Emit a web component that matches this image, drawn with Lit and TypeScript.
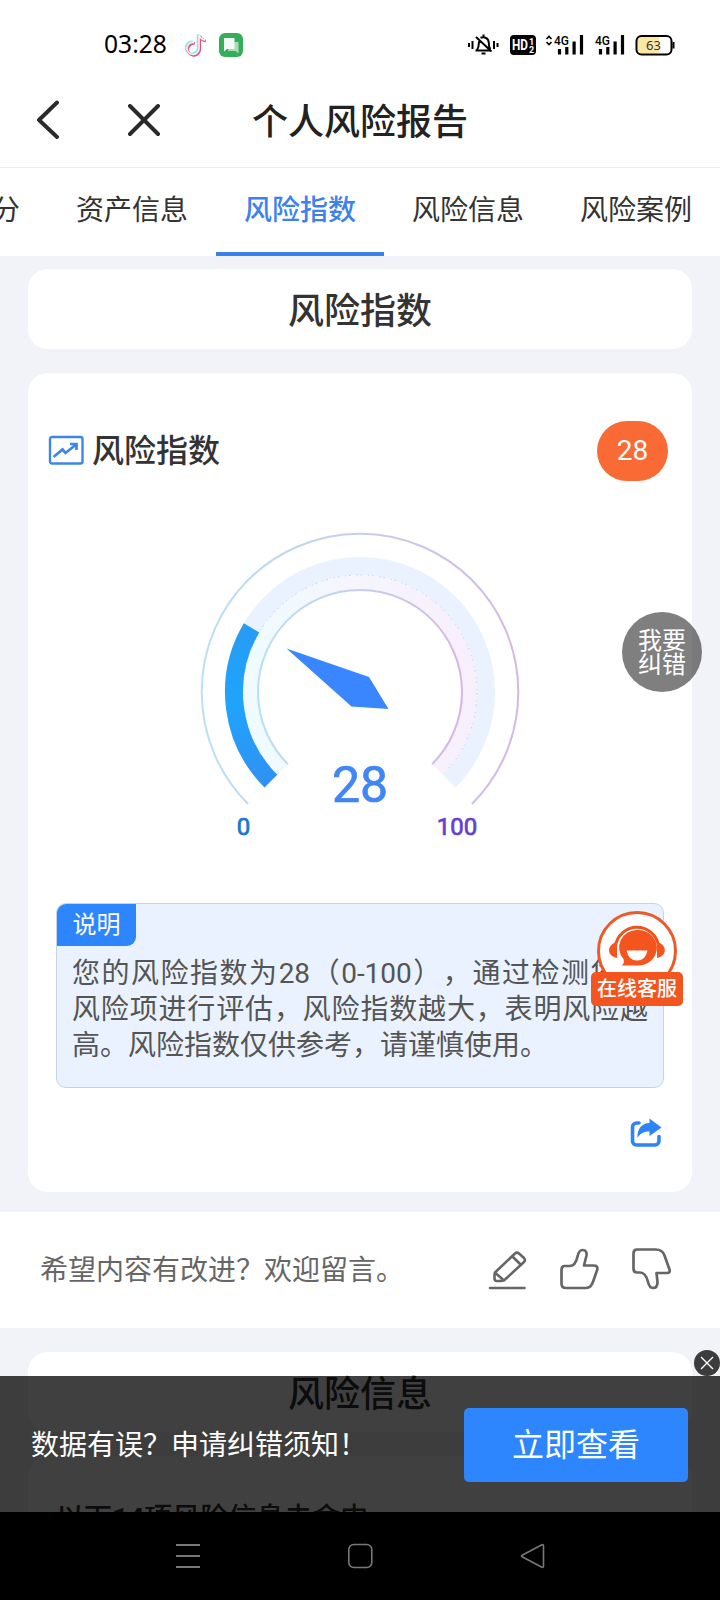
import { LitElement, html, svg, css } from "lit";
import { customElement, property } from "lit/decorators.js";

const point = (r: number, deg: number) => {
  const a = (deg * Math.PI) / 180;
  return `${(170 + r * Math.cos(a)).toFixed(2)} ${(170 + r * Math.sin(a)).toFixed(2)}`;
};

/** Arc of radius r that starts at the lower left and covers a share of the 270° dial. */
const arc = (r: number, share: number) =>
  `M${point(r, 135)}A${r} ${r} 0 ${share * 270 > 180 ? 1 : 0} 1 ${point(r, 135 + share * 270)}`;

@customElement("risk-gauge")
export class RiskGauge extends LitElement {
  @property({ type: Number }) value = 0;

  static styles = css`
    :host { display: block; width: 340px; height: 330px; }
    svg { display: block; }
    text { font-family: Roboto, "Noto Sans CJK SC", sans-serif; font-weight: 400; text-anchor: middle; stroke-width: .7; }
    .value { font-size: 50px; fill: #4186f2; stroke: #4186f2; }
    .min { font-size: 24px; fill: #1577d0; stroke: #1577d0; }
    .max { font-size: 24px; fill: #653fce; stroke: #653fce; }
  `;

  render() {
    return html`<svg width="340" height="330" viewBox="0 0 340 330">
      <defs>
        <linearGradient id="rim" x1="0" x2="1" y1="0" y2="0">
          <stop offset="0" stop-color="#b9e0f4" />
          <stop offset=".5" stop-color="#c8cdec" />
          <stop offset="1" stop-color="#d4b8e4" />
        </linearGradient>
        <linearGradient id="inner" x1="0" x2="1" y1="0" y2="0">
          <stop offset="0" stop-color="#effbff" />
          <stop offset=".5" stop-color="#f5f5fe" />
          <stop offset="1" stop-color="#f8effc" />
        </linearGradient>
        <linearGradient id="fill" x1="0" x2="0" y1="0" y2="1">
          <stop offset="0" stop-color="#269cf6" />
          <stop offset=".5" stop-color="#1fa4fb" />
          <stop offset="1" stop-color="#2f92f3" />
        </linearGradient>
      </defs>
      ${svg`
        <path d=${arc(158.3, 1)} fill="none" stroke="url(#rim)" stroke-width="2" />
        <path d=${arc(109.5, 1)} fill="none" stroke="url(#inner)" stroke-width="15" />
        <path d=${arc(126, 1)} fill="none" stroke="#eaf2ff" stroke-width="18" />
        <path d=${arc(117, 1)} fill="none" stroke="#b9b4d4" stroke-width=".9" stroke-dasharray="1.5 6 1 3" opacity=".75" />
        <path d=${arc(102, 1)} fill="none" stroke="url(#rim)" stroke-width="2" />
        <path d=${arc(126, this.value / 100)} fill="none" stroke="url(#fill)" stroke-width="18" />
      `}
      <path d="M96.500 126.500L179 155L198.500 187L161.500 184.500z" fill="#3a86ff" />
      <text class="value" x="170" y="280.300">${this.value}</text>
      <text class="min" x="53.500" y="313">0</text>
      <text class="max" x="267" y="313">100</text>
    </svg>`;
  }
}

@customElement("app-root")
export class AppRoot extends LitElement {
  static styles = css`
    :host {
      display: block; position: relative; width: 720px; height: 1600px; overflow: hidden;
      background: #f2f3f8; color: #333;
      font-family: Roboto, "Noto Sans CJK SC", sans-serif;
      text-spacing-trim: space-all;
    }
    * { box-sizing: border-box; }
    svg { display: block; flex: none; }
    .status { height: 80px; background: #fff; display: flex; align-items: center; padding: 10px 44px 0 104px; color: #000; }
    .clock { font: 24.6px/30px "Noto Sans", sans-serif; width: 81px; padding-bottom: 2px; white-space: nowrap; }
    .grow { flex: 1; }
    .nav { height: 88px; background: #fff; border-bottom: 1px solid #ececee; display: flex; align-items: center; padding: 0 0 7px 36px; color: #222; }
    .nav h1 { margin: 5px 0 0 92px; font-size: 36px; line-height: 44px; font-weight: 500; white-space: nowrap; }
    .nav .cross { margin-left: 68px; }
    .tabs { height: 88px; background: #fff; display: flex; overflow: hidden; }
    .tab { flex: none; width: 168px; padding-top: 24px; border-bottom: 4px solid transparent; text-align: center; font-size: 28px; line-height: 38px; white-space: nowrap; }
    .tab.first { width: 48px; direction: rtl; padding-right: 28px; text-align: right; }
    .tab.active { color: #3c82ee; font-weight: 500; border-color: #3c80ea; }
    .heading { margin: 13px 28px 0; height: 80px; background: #fff; border-radius: 20px; text-align: center; font-size: 36px; line-height: 86px; font-weight: 500; }
    .card { margin: 24px 28px 0; height: 819px; background: #fff; border-radius: 20px; display: flex; flex-direction: column; padding: 48px 24px 0 20px; }
    .cardhead { display: flex; align-items: center; height: 60px; }
    .cardhead svg { margin-bottom: 3px; }
    .cardhead h2 { margin: 0 auto 0 8px; font-size: 32px; line-height: 40px; font-weight: 500; }
    .score { width: 71px; height: 60px; border-radius: 30px; background: #fa6a35; color: #fff; font-size: 28px; line-height: 59px; text-align: center; }
    risk-gauge { margin: 41px 0 0 142px; }
    .note { margin: 51px 4px 0 8px; height: 185px; border: 1px solid #c6d3e6; border-radius: 10px; background: #eaf2ff; color: #555; }
    .tag { width: 79px; height: 42px; border-radius: 9px 0 9px 0; background: #2e86ff; color: #fff; font-size: 24px; line-height: 42px; text-align: center; }
    .lines { padding: 10px 15px 0; font-size: 28px; line-height: 36px; }
    .line { display: block; white-space: nowrap; text-align: justify; text-align-last: justify; }
    .line.last { text-align-last: left; }
    .share { margin: 30px 6px 0 auto; }
    .feedback { margin-top: 20px; height: 116px; background: #fff; display: flex; align-items: center; padding: 0 49px 2px 40px; color: #666; font-size: 28px; }
    .feedback span { flex: 1; white-space: nowrap; padding-bottom: 2px; }
    .feedback svg + svg { margin-left: 32px; }
    .next { margin-top: 24px; }
    .list { margin: 24px 28px 0; height: 180px; background: #fff; border-radius: 20px; padding: 45px 28px; font-size: 28px; line-height: 36px; font-weight: 500; }
    .list b { font-weight: 800; }
    .prompt { position: absolute; left: 0; top: 1376px; width: 720px; height: 136px; background: rgba(0, 0, 0, .75); display: flex; align-items: center; justify-content: space-between; padding: 2px 32px 0 31px; color: #fff; font-size: 28px; }
    .prompt span { padding-bottom: 4px; }
    .button { width: 224px; height: 74px; border-radius: 5px; background: #2e86ff; text-align: center; font-size: 32px; line-height: 75px; }
    .dismiss { position: absolute; left: 694px; top: 1350px; }
    .system { position: absolute; left: 0; top: 1512px; width: 720px; height: 88px; background: #000; display: flex; align-items: center; padding: 0 174px 0 175px; justify-content: space-between; }
    .correct { position: absolute; left: 622px; top: 612px; width: 80px; height: 80px; border-radius: 50%; background: rgba(0, 0, 0, .5); color: #fff; font-size: 24px; line-height: 24px; text-align: center; padding: 17px 16px 0; }
    .service { position: absolute; left: 591px; top: 910px; width: 92px; display: flex; flex-direction: column; align-items: center; }
    .service svg { margin: 0 1px -18px 0; }
    .service span { position: relative; width: 92px; height: 34px; border-radius: 5px; background: #f4541d; color: #fff; font-size: 20px; font-weight: 500; line-height: 35px; text-align: center; }
  `;

  render() {
    const bars = (x: number) => svg`<path d="M${x} 24v5.500M${x + 7.3} 22v7.500M${x + 14.6} 16.500v13M${x + 22} 10v19.500" stroke="#000" stroke-width="3.200" />`;
    return html`
      <header class="status">
        <span class="clock">03:28</span>
        <svg width="60" height="26" viewBox="0 0 60 26">
          <g fill="none" stroke-width="2.600">
            <path d="M9 10.500a6 6 0 1 0 5 6V3c1 3 3 4.500 6 5" stroke="#8fe3e6" transform="translate(-1 -.5)" />
            <path d="M9 10.500a6 6 0 1 0 5 6V3c1 3 3 4.500 6 5" stroke="#e0527e" transform="translate(.8 1)" />
            <path d="M9 10.500a6 6 0 1 0 5 6V3c1 3 3 4.500 6 5" stroke="#f3eef3" stroke-width="1.800" />
          </g>
          <rect x="34" y="1" width="24" height="24" rx="6" fill="#35ae59" />
          <path d="M45 10h8.500v11.500l-3-2.500H43z" fill="#a9dcb6" />
          <path d="M39 6h10.500v11H42l-3 2.500z" fill="#f1faf3" />
        </svg>
        <span class="grow"></span>
        <svg width="208" height="40" viewBox="0 0 208 40">
          <g fill="none" stroke="#000" stroke-width="2">
            <path d="M1 18v4M4.500 16v8M26 16v8M29.500 18v4" />
            <path d="M7.500 25.500h15M9 25c1.500-2 1.800-4 1.800-6.500 0-1.500.4-2.500 1.200-3.500M12.500 12.800c4.500-1.800 8.300 1 8.300 5.200 0 3 .2 4.500 1.500 6.500M15.500 9.500v3M8 12l15.500 14.500M13.500 28.500h4" />
          </g>
          <rect x="42" y="10" width="26" height="20" rx="4" />
          <text x="44" y="25.300" fill="#fff" font-family="Roboto" font-size="14" font-weight="700" textLength="16" lengthAdjust="spacingAndGlyphs">HD</text>
          <text x="61" y="19.500" fill="#fff" font-family="Roboto" font-size="9" font-weight="700">1</text>
          <text x="61" y="28" fill="#fff" font-family="Roboto" font-size="9" font-weight="700">2</text>
          <path d="M78.500 14l2.500-2.500 2.500 2.500M78.500 17l2.500 2.500 2.500-2.500" fill="none" stroke="#000" stroke-width="1.600" />
          <text x="86" y="20" font-family="Roboto" font-size="13.500" font-weight="500" textLength="15" lengthAdjust="spacingAndGlyphs">4G</text>
          ${bars(91.5)}
          <text x="127" y="20" font-family="Roboto" font-size="13.500" font-weight="500" textLength="15" lengthAdjust="spacingAndGlyphs">4G</text>
          ${bars(132.5)}
          <path d="M173 12h18v16h-18a3 3 0 0 1-3-3v-10a3 3 0 0 1 3-3" fill="#fbe8a4" />
          <rect x="168.500" y="11" width="35" height="18.500" rx="5" fill="none" stroke="#000" stroke-width="2" />
          <path d="M205.500 17v6.500" stroke="#000" stroke-width="2" />
          <text x="185.500" y="25" font-family="Noto Sans" font-size="13" text-anchor="middle" fill="#333">63</text>
        </svg>
      </header>

      <nav class="nav">
        <svg width="24" height="40" viewBox="0 0 24 40" fill="none" stroke="#2a2a2a" stroke-width="3.900" stroke-linecap="round" stroke-linejoin="round"><path d="M21 2.500L3 20l18 17" /></svg>
        <svg class="cross" width="32" height="32" viewBox="0 0 32 32" fill="none" stroke="#2a2a2a" stroke-width="3.900" stroke-linecap="round"><path d="M2 2l28 28M30 2L2 30" /></svg>
        <h1>个人风险报告</h1>
      </nav>

      <div class="tabs">
        <div class="tab first">评分</div>
        <div class="tab">资产信息</div>
        <div class="tab active">风险指数</div>
        <div class="tab">风险信息</div>
        <div class="tab">风险案例</div>
      </div>

      <div class="heading">风险指数</div>

      <section class="card">
        <div class="cardhead">
          <svg width="36" height="30" viewBox="0 0 36 30" fill="none" stroke="#3f86ea" stroke-width="2.400"><rect x="2" y="2" width="32.500" height="26.500" rx="2" /><path d="M5.500 22l9-7.500 3 3.500 10-8M22 9h6.500v6" stroke-width="2.700" /></svg>
          <h2>风险指数</h2>
          <span class="score">28</span>
        </div>
        <risk-gauge .value=${28}></risk-gauge>
        <div class="note">
          <div class="tag">说明</div>
          <div class="lines">
            <span class="line">您的风险指数为28（0-100），通过检测您的</span>
            <span class="line">风险项进行评估，风险指数越大，表明风险越</span>
            <span class="line last">高。风险指数仅供参考，请谨慎使用。</span>
          </div>
        </div>
        <svg class="share" width="32" height="32" viewBox="0 0 32 32">
          <path d="M9 5H6.500a4 4 0 0 0-4 4v14a4 4 0 0 0 4 4H25a4 4 0 0 0 4-4v-4.500" fill="none" stroke="#2f84f5" stroke-width="3.600" stroke-linecap="round" />
          <path d="M19.500 .5L31.500 9.500L19.500 18v-4.500c-5.500-.3-9.500 2-12 6.500-.6-8.500 4-15 12-15z" fill="#2f84f5" />
        </svg>
      </section>

      <div class="feedback">
        <span>希望内容有改进？欢迎留言。</span>
        <svg width="40" height="44" viewBox="0 0 40 44" fill="none" stroke="#666" stroke-width="2.600" stroke-linejoin="round" stroke-linecap="round"><path d="M3 41h34.500M8 25.500L28 6.500q2-1.800 4 0l5 4.500q1.800 2 0 4L18 32.500q-1.800 1.500-4 1.500H10q-2.500 0-2.500-2.500v-3q0-2 .5-3M25.500 9.500l8.500 8.500M9 26.500l8 7" /></svg>
        <svg width="40" height="44" viewBox="0 0 40 44" fill="none" stroke="#666" stroke-width="2.700" stroke-linejoin="round"><path d="M5.500 19h5c5 0 7-4.500 8-9.500 1-4.500 2-6.500 5-6.500 3.500 0 4.500 2.500 4 5.500L25 18.500h9.500q4.500 0 3.800 4l-4 11.500c-2 5.500-3.500 7-7.500 7H7q-4.500 0-4.500-4.500V23q0-4 3-4z" /></svg>
        <svg width="40" height="44" viewBox="0 0 40 44" fill="none" stroke="#666" stroke-width="2.700" stroke-linejoin="round"><path d="M6 2.500h18.500c5 0 7.500 1.500 9 6l5 14q1 3.500-2.500 3.500H25.500l1 9c0 4-1.500 6-4.500 6-3 0-4-2-5-6-1.300-5.500-3-9.500-8-9.500H6q-3.500 0-3.500-4V6.500q0-4 3.500-4z" /></svg>
      </div>

      <div class="heading next">风险信息</div>
      <div class="list">以下<b>14</b>项风险信息未命中</div>

      <div class="correct">我要纠错</div>
      <div class="service">
        <svg width="80" height="80" viewBox="0 0 80 80">
          <circle cx="40" cy="41" r="38.500" fill="#fff" stroke="#ec5a28" stroke-width="3" />
          <path d="M18.500 36a21.700 21.700 0 0 1 43 0" fill="none" stroke="#ef541f" stroke-width="3" />
          <path d="M20 32v16c-10.500-2-10.500-13.500 0-16M60 32v16c10.500-2 10.500-13.500 0-16" fill="#f4541d" />
          <path d="M40 20a18.500 17.800 0 1 1 0 35.500H24.500q3.500-2.500 2-6.500a18 17.500 0 0 1 13.500-29" fill="#f4541d" />
          <path d="M29.500 40.500h21q-2 10-10.500 10t-10.500-10" fill="#fff" />
        </svg>
        <span>在线客服</span>
      </div>

      <svg class="dismiss" width="26" height="26" viewBox="0 0 26 26"><circle cx="13" cy="13" r="13" fill="#3c3c3c" /><path d="M7 7l12 12M19 7L7 19" stroke="#fff" stroke-width="1.400" /></svg>
      <div class="prompt"><span>数据有误？申请纠错须知！</span><div class="button">立即查看</div></div>

      <footer class="system">
        <svg width="26" height="26" viewBox="0 0 26 26"><path d="M1 2h24M1 13h24M1 24h24" stroke="#777" stroke-width="1.800" /></svg>
        <svg width="26" height="26" viewBox="1 0 26 26" fill="none" stroke="#777" stroke-width="1.600"><rect x="1.800" y="1.500" width="23" height="23" rx="5" /></svg>
        <svg width="26" height="26" viewBox="0 0 26 26" fill="none" stroke="#777" stroke-width="1.600"><path d="M2.500 12L21.500 2q2-1 2 1v20q0 2-2 1L2.500 14q-2-1 0-2z" /></svg>
      </footer>
    `;
  }
}
